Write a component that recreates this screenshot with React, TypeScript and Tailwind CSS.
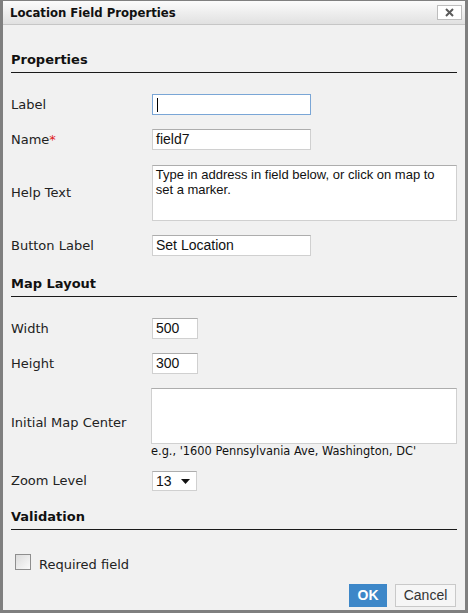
import React from "react";

const labelFont = { fontFamily: '"DejaVu Sans", Verdana, sans-serif' };
const titleFont = { fontFamily: '"DejaVu Sans Condensed", Tahoma, sans-serif' };
const inputFont = { fontFamily: '"Liberation Sans", Arial, sans-serif' };

function Heading({ title, className }: { title: string; className: string }) {
  return (
    <div
      className={"border-b border-[#1a1a1a] pb-[4px] text-[13px] leading-[16px] font-bold text-[#111] " + className}
      style={labelFont}
    >
      {title}
    </div>
  );
}

function Row({ label, children, className, req }: { label: string; children: React.ReactNode; className: string; req?: boolean }) {
  return (
    <div className={"flex items-center " + className}>
      <div className="w-[141px] text-[13px] text-[#222]" style={labelFont}>
        {label}
        {req && <span className="text-[#e0201a]">*</span>}
      </div>
      {children}
    </div>
  );
}

const box = "bg-white border border-[#d0d0d0] border-t-[#adadad] text-[#111] px-[3px]";

export default function App() {
  return (
    <div className="w-[468px] h-[613px] bg-[#7f7f7f] px-[3px] pt-[1px] pb-[3px]">
      <div className="flex flex-col h-full bg-[#f1f1f1]">
        <div className="h-[24px] shrink-0 flex items-center justify-between pl-[7px] pr-[3px] bg-gradient-to-b from-[#fbfbfb] to-[#e1e1e1] border-b border-[#c6c6c6]">
          <div className="text-[13px] font-bold text-[#111]" style={titleFont}>
            Location Field Properties
          </div>
          <div className="w-[25px] h-[15px] bg-white border border-[#bdbdbd] flex items-center justify-center">
            <svg width="9" height="9" viewBox="0 0 9 9">
              <path d="M1 1L8 8M8 1L1 8" stroke="#5a5a5a" strokeWidth="2" />
            </svg>
          </div>
        </div>

        <div className="px-[8px]">
          <Heading title="Properties" className="mt-[27px]" />

          <Row label="Label" className="mt-[21px]">
            <div className="w-[159px] h-[21px] bg-white border border-[#7aa6d6] flex items-center pl-[4px]">
              <div className="w-px h-[14px] bg-black" />
            </div>
          </Row>

          <Row label="Name" req className="mt-[14px]">
            <div className={box + " w-[159px] h-[21px] leading-[19px] text-[14px]"} style={inputFont}>
              field7
            </div>
          </Row>

          <Row label="Help Text" className="mt-[15px]">
            <div className={box + " w-[306px] h-[56px] leading-[15px] pt-[1px] text-[13px]"} style={inputFont}>
              Type in address in field below, or click on map to set a marker.
            </div>
          </Row>

          <Row label="Button Label" className="mt-[14px]">
            <div className={box + " w-[159px] h-[21px] leading-[19px] text-[14px]"} style={inputFont}>
              Set Location
            </div>
          </Row>

          <Heading title="Map Layout" className="mt-[20px]" />

          <Row label="Width" className="mt-[21px]">
            <div className={box + " w-[46px] h-[21px] leading-[19px] text-[14px]"} style={inputFont}>
              500
            </div>
          </Row>

          <Row label="Height" className="mt-[14px]">
            <div className={box + " w-[46px] h-[21px] leading-[19px] text-[14px]"} style={inputFont}>
              300
            </div>
          </Row>

          <Row label="Initial Map Center" className="mt-[14px]">
            <div className="flex flex-col">
              <div className={box + " w-[306px] h-[56px]"} />
              <div className="text-[11.4px] leading-[13px] mt-[1px] text-[#111]" style={labelFont}>
                e.g., '1600 Pennsylvania Ave, Washington, DC'
              </div>
            </div>
          </Row>

          <Row label="Zoom Level" className="mt-[13px]">
            <div className={box + " w-[45px] h-[20px] flex items-center justify-between pr-[6px] text-[14px]"} style={inputFont}>
              <span>13</span>
              <svg width="9" height="5" viewBox="0 0 9 5">
                <path d="M0 0H9L4.5 5Z" fill="#111" />
              </svg>
            </div>
          </Row>

          <Heading title="Validation" className="mt-[18px]" />

          <div className="flex items-start mt-[24px] ml-[4px]">
            <div className="w-[16px] h-[16px] border border-[#8e8e8e] bg-gradient-to-br from-[#dcdcdc] to-[#fbfbfb]" />
            <div className="ml-[8px] mt-[3px] text-[13px] leading-[15px] text-[#222]" style={labelFont}>
              Required field
            </div>
          </div>

          <div className="flex justify-end gap-[8px] mt-[12px] pr-[1px]" style={inputFont}>
            <div className="w-[38px] h-[23px] bg-[#3d87c8] text-white text-[14px] font-bold flex items-center justify-center">
              OK
            </div>
            <div className="w-[61px] h-[23px] bg-[#f6f6f6] border border-[#c9c9c9] text-[#333] text-[14px] flex items-center justify-center">
              Cancel
            </div>
          </div>
        </div>
      </div>
    </div>
  );
}
